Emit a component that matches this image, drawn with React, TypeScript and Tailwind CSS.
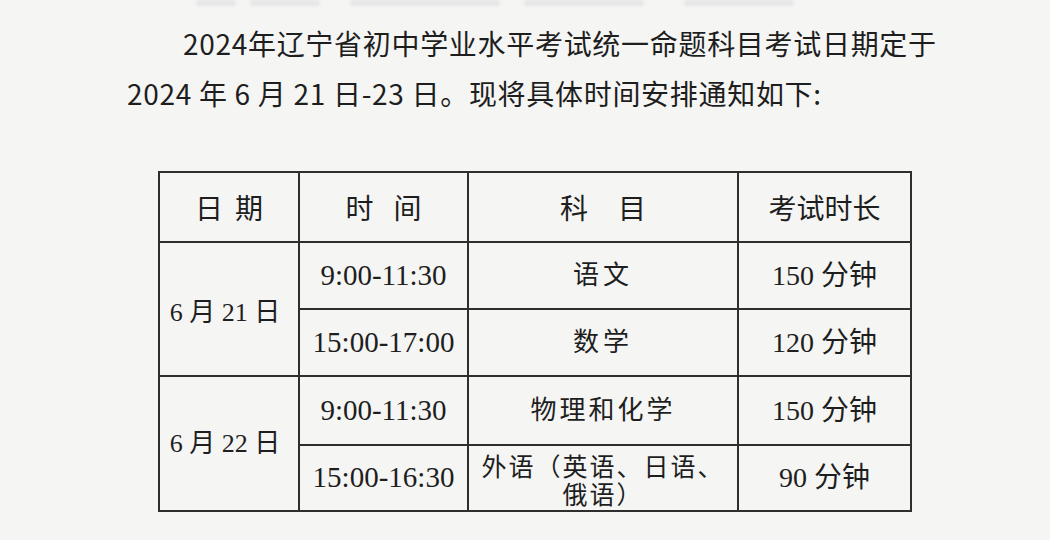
import React from "react";

const serifStack = {
  fontFamily: '"Liberation Serif", "Noto Sans CJK SC", serif',
};

const sansStack = { fontFamily: '"Noto Sans CJK SC", sans-serif' };

export default function App() {
  const smudges = [
    { ml: 196, w: 40 },
    { ml: 14, w: 70 },
    { ml: 30, w: 150 },
    { ml: 24, w: 120 },
    { ml: 40, w: 110 },
  ];
  return (
    <div
      className="w-[1050px] h-[540px] bg-[#f5f5f4] overflow-hidden flex flex-col text-[#1e1e1e]"
      style={{ fontFamily: '"Liberation Sans Narrow", "Noto Sans CJK SC", sans-serif' }}
    >
      <div className="flex h-[8px] items-start">
        {smudges.map((s, i) => (
          <div
            key={i}
            className="h-[6px] bg-[#e6e6e6] blur-[1.5px] rounded-sm"
            style={{ marginLeft: s.ml, width: s.w }}
          />
        ))}
      </div>

      <div className="mt-[10px] pl-[127px] text-[28px] leading-[50px] tracking-[0.7px] whitespace-nowrap">
        <div className="pl-[56px]">2024年辽宁省初中学业水平考试统一命题科目考试日期定于</div>
        <div>2024 年 6 月 21 日-23 日。现将具体时间安排通知如下:</div>
      </div>

      <div className="mt-[53px] pl-[158px]">
        <table
          className="table-fixed border-collapse w-[752px] text-center"
          style={serifStack}
        >
          <colgroup>
            <col className="w-[140px]" />
            <col className="w-[169px]" />
            <col className="w-[270px]" />
            <col className="w-[173px]" />
          </colgroup>
          <tbody>
            <tr className="h-[70px]">
              <td className="border-2 border-[#2e2e2e] text-[28px] font-normal" style={sansStack}>
                <span className="inline-flex gap-[12px]"><span>日</span><span>期</span></span>
              </td>
              <td className="border-2 border-[#2e2e2e] text-[28px] font-normal" style={sansStack}>
                <span className="inline-flex gap-[20px]"><span>时</span><span>间</span></span>
              </td>
              <td className="border-2 border-[#2e2e2e] text-[28px] font-normal" style={sansStack}>
                <span className="inline-flex gap-[30px]"><span>科</span><span>目</span></span>
              </td>
              <td className="border-2 border-[#2e2e2e] text-[28px] font-normal" style={sansStack}>
                考试时长
              </td>
            </tr>
            <tr className="h-[67px]">
              <td rowSpan={2} className="border-2 border-[#2e2e2e] text-[26px] pt-[6px] pr-[8px]">6 月 21 日</td>
              <td className="border-2 border-[#2e2e2e] text-[29px]">9:00-11:30</td>
              <td className="border-2 border-[#2e2e2e] text-[26px] tracking-[4px]">语文</td>
              <td className="border-2 border-[#2e2e2e] text-[28px]">150 分钟</td>
            </tr>
            <tr className="h-[67px]">
              <td className="border-2 border-[#2e2e2e] text-[29px]">15:00-17:00</td>
              <td className="border-2 border-[#2e2e2e] text-[26px] tracking-[4px]">数学</td>
              <td className="border-2 border-[#2e2e2e] text-[28px]">120 分钟</td>
            </tr>
            <tr className="h-[69px]">
              <td rowSpan={2} className="border-2 border-[#2e2e2e] text-[26px] pr-[8px]">6 月 22 日</td>
              <td className="border-2 border-[#2e2e2e] text-[29px]">9:00-11:30</td>
              <td className="border-2 border-[#2e2e2e] text-[26px] tracking-[3px]">物理和化学</td>
              <td className="border-2 border-[#2e2e2e] text-[28px]">150 分钟</td>
            </tr>
            <tr className="h-[66px]">
              <td className="border-2 border-[#2e2e2e] text-[29px]">15:00-16:30</td>
              <td className="border-2 border-[#2e2e2e] text-[25px] leading-[28px] tracking-[2px] pt-[8px]">
                <div>外语（英语、日语、</div>
                <div>俄语）</div>
              </td>
              <td className="border-2 border-[#2e2e2e] text-[28px]">90 分钟</td>
            </tr>
          </tbody>
        </table>
      </div>
    </div>
  );
}
